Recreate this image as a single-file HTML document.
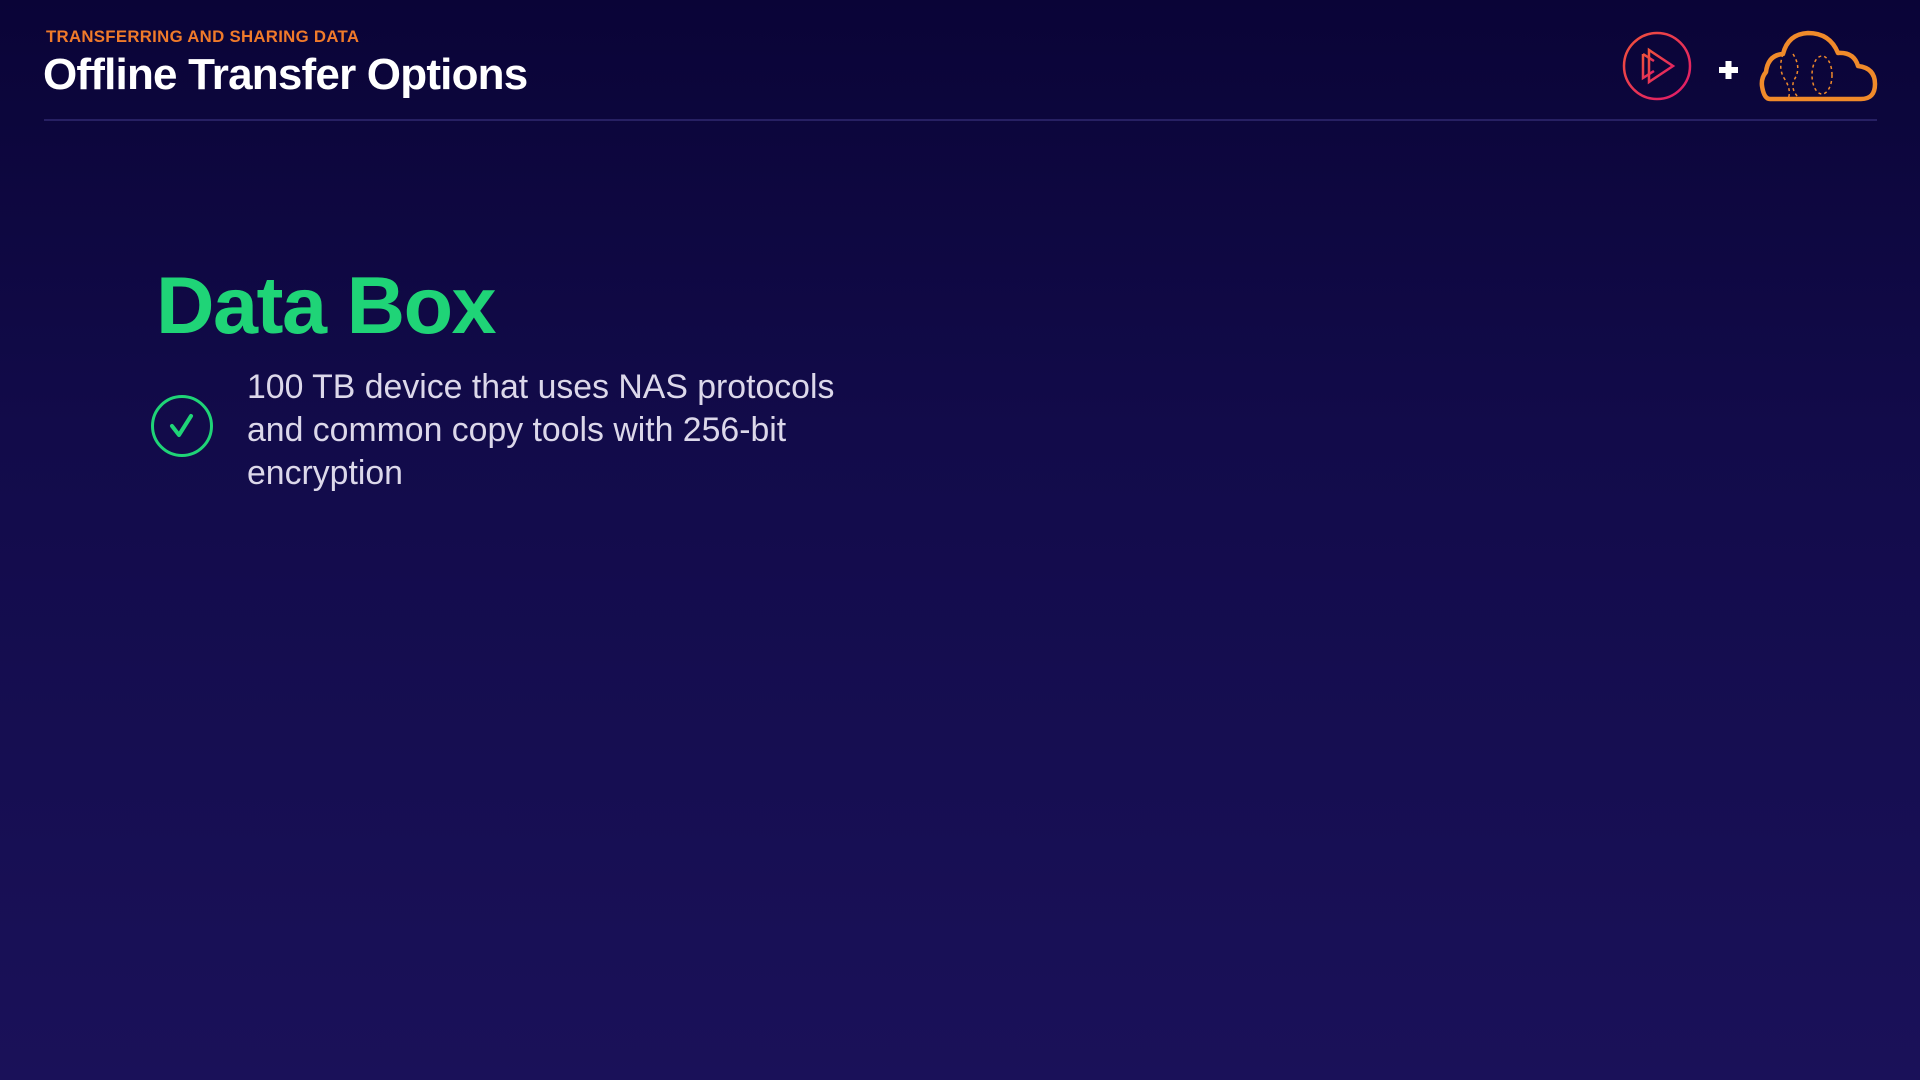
<!DOCTYPE html>
<html><head><style>
html,body{margin:0;padding:0}
body{width:1920px;height:1080px;overflow:hidden;position:relative;background:linear-gradient(180deg,#0a0437 0%,#120b4a 40%,#1a1159 100%);font-family:"Liberation Sans",sans-serif}
.sub{position:absolute;left:46px;top:27px;font-size:16.8px;font-weight:bold;color:#f07a2a;letter-spacing:0.3px}
.title{position:absolute;left:43px;top:50px;font-size:44px;font-weight:bold;color:#fff;letter-spacing:-0.8px}
.line{position:absolute;left:44px;top:119px;width:1833px;height:2px;background:#272063}
.h{position:absolute;left:156px;top:260px;font-size:81px;font-weight:bold;color:#1fd477;letter-spacing:-1.5px}
.body{position:absolute;left:247px;top:366px;font-size:33.8px;line-height:43px;color:#dcd8ea;width:630px}
</style></head><body>
<div class="sub">TRANSFERRING AND SHARING DATA</div>
<div class="title">Offline Transfer Options</div>
<div class="line"></div>
<svg style="position:absolute;left:1618px;top:28px" width="270" height="80" viewBox="0 0 270 80">
<defs><linearGradient id="g" x1="0" y1="0" x2="1" y2="1"><stop offset="0" stop-color="#f0533a"/><stop offset="1" stop-color="#e0186b"/></linearGradient></defs>
<circle cx="39" cy="38" r="33" fill="none" stroke="url(#g)" stroke-width="2.5"/>
<path d="M25 26 L25 50 L36 43 M25 26 L36 33" fill="none" stroke="url(#g)" stroke-width="2.5"/>
<path d="M31 22 L31 54 L55 38 Z" fill="none" stroke="url(#g)" stroke-width="2.5"/>
<path d="M101 42 H120 M110.5 33 V51" stroke="#fff" stroke-width="6"/>
<path d="M152 71 H243 Q257 71 257 56 Q257 40 240 38 Q236 24 220 25 Q212 5 190 5 Q170 6 165 26 Q150 27 148 44 Q143 50 144 58 Q146 71 152 71 Z" fill="none" stroke="#f08a2a" stroke-width="4.5" stroke-linejoin="round"/>
<path d="M165 26 Q160 40 166 50 Q174 62 170 71 M175 26 Q184 40 176 52 Q172 62 182 71" fill="none" stroke="#f08a2a" stroke-width="1.5" stroke-dasharray="3 3"/>
<ellipse cx="204" cy="47" rx="10" ry="19" fill="none" stroke="#f08a2a" stroke-width="1.5" stroke-dasharray="3 3"/>
</svg>
<div class="h">Data Box</div>
<svg style="position:absolute;left:150px;top:394px" width="64" height="64"><circle cx="32" cy="32" r="29.5" fill="none" stroke="#1fd477" stroke-width="3"/><path d="M22 32 L29 41 L41 22" fill="none" stroke="#1fd477" stroke-width="4" stroke-linecap="round" stroke-linejoin="round"/></svg>
<div class="body">100 TB device that uses NAS protocols and common copy tools with 256-bit encryption</div>
</body></html>
